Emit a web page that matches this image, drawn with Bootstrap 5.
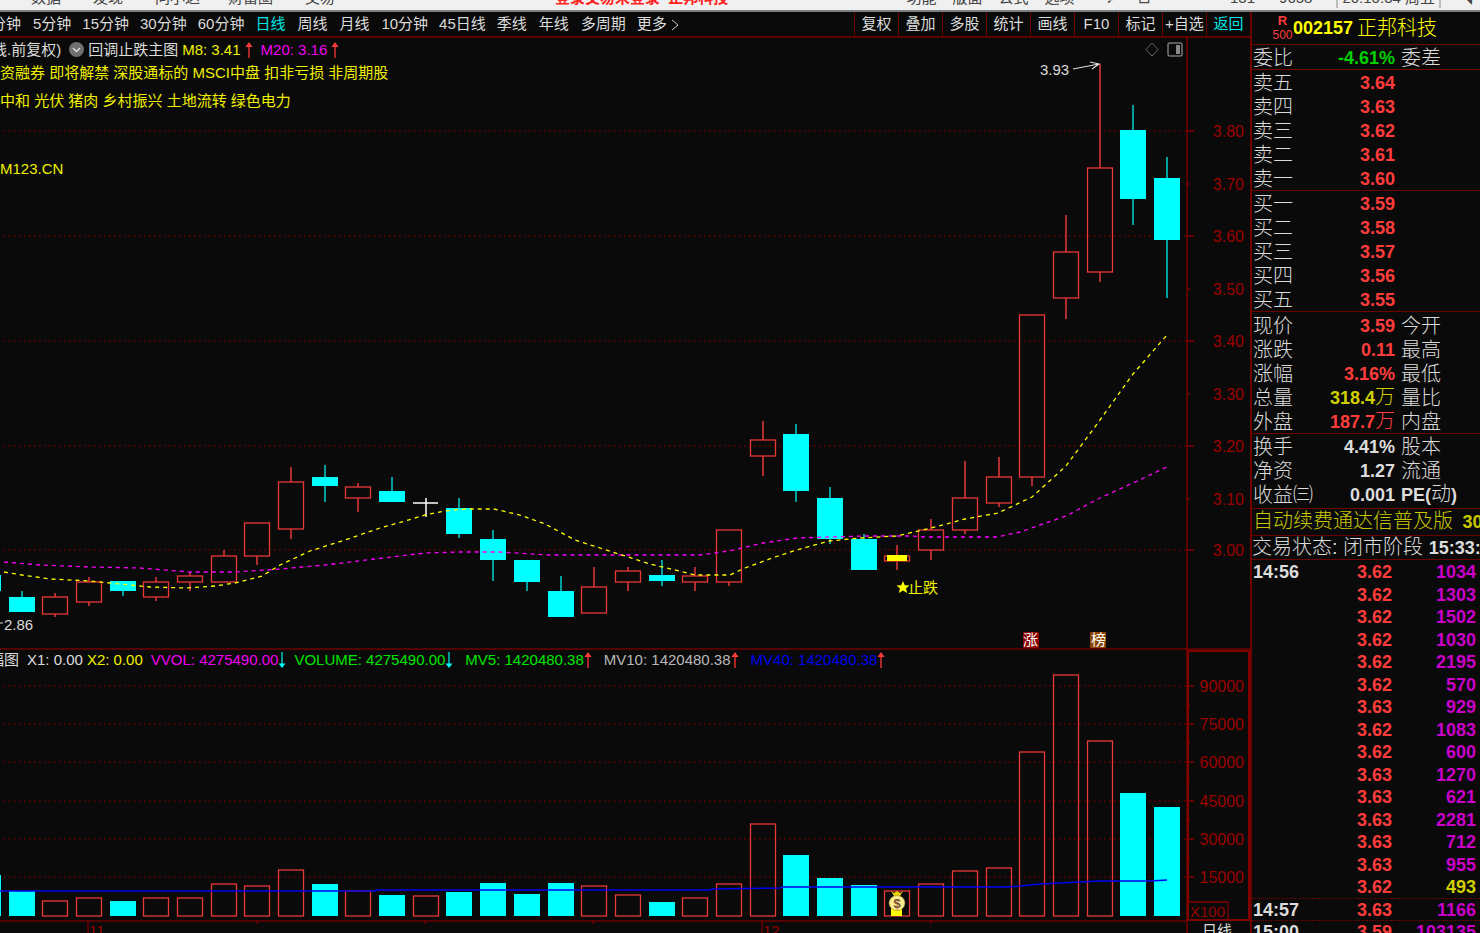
<!DOCTYPE html>
<html lang="zh-CN">
<head>
<meta charset="utf-8">
<meta name="viewport" content="width=device-width, initial-scale=1">
<title>002157 正邦科技</title>
<link href="https://cdn.jsdelivr.net/npm/bootstrap@5.3.0/dist/css/bootstrap.min.css" rel="stylesheet">
<style>
:root{--bg:#0a0a0a;--rule:#6e0000;--up:#ff3c3c;--cy:#00ffff;--ye:#ffff00;--mg:#ff00ff;--tx:#dcdcdc}
body{background:var(--bg);color:var(--tx);font:15px/24px "Liberation Sans","Noto Sans CJK SC",sans-serif;overflow:hidden}
button{background:none;border:0;padding:0;color:inherit;font:inherit;white-space:nowrap}
.menubar{height:12px;background:#f0f0f0;border-bottom:2px solid #7d8080;color:#444;overflow:hidden}
.menubar>div{height:20px;line-height:20px;margin-top:-12px;white-space:nowrap}
.alert-txt{color:#ff2020;font-weight:700}
.m-l{width:555px;padding-left:31px}
.m-r{padding-right:8px}
.clock{border-left:2px solid #bbb;border-right:2px solid #bbb;padding:0 4px}
.toolbar-row{height:26px;border-bottom:2px solid #5c0000}
.periods{margin-left:-9px;gap:11px;overflow:hidden}
.periods button{min-width:31px;text-align:left}
.tools button{width:44px;border-left:1px solid var(--rule)}
.c-cy{color:#00e6e6}.c-ye{color:#f0f000}.c-mg{color:#f000f0}.c-gr{color:#00e600}.c-gy{color:#b8b8b8}.c-bl{color:#0000f0}
.plot{position:relative;min-width:0}
.plot>svg{display:block;width:100%;height:auto}
.legend-over{position:absolute;top:0;left:0;white-space:nowrap}
.l1{margin-left:-8px;line-height:23px}
.l2{margin-left:-11px;line-height:20px}
.l3{padding-top:44px}
.far{margin-left:12px}
.arr{width:8px;height:16px}
.side{width:230px;border-left:2px solid var(--rule);overflow:hidden;font-size:20px;line-height:22px;white-space:nowrap}
.side b{font-size:18px;font-weight:700}
.ttl{height:33px;border-bottom:1px solid var(--rule);color:#ffff00;padding-left:20px}
.rating{width:21px;color:var(--up)}
.side .rating b,.rating span{display:block;font-size:13px;line-height:15px;text-align:center}
.rating span{font-size:12px}
.quote{width:100%;table-layout:fixed;border-bottom:1px solid var(--rule)}
.quote tr{height:24px}
.quote td,.quote th{padding:1px 0 0 1px;font-weight:300}
.quote th:first-child{width:60px;color:var(--tx)}
.quote td{width:83px;text-align:right}
.quote td+th{padding-left:6px}
.trade{margin-top:1px}
.last-q{border-bottom:0}
.red{color:var(--up)}.yel{color:#d0d000}.grn{color:#00d000}
.ttl,.promo,.state{font-weight:300}
.promo{height:28px;line-height:24px;margin-top:2px;border-top:1px solid var(--rule);border-bottom:1px solid var(--rule);color:#c8c800;padding-left:1px}
.state{height:24px;line-height:22px;border-bottom:1px solid var(--rule)}
.ticks{width:100%;table-layout:fixed;font-size:18px;line-height:20px;font-weight:700}
.ticks tr{height:23px}.ticks tr:nth-child(even){height:22px}
.ticks td{padding:1px 0 0 1px}
.ticks td:nth-child(1){width:60px}
.ticks td:nth-child(2){width:80px;text-align:right;color:var(--up)}
.ticks td:nth-child(3){text-align:right;padding-right:4px;color:#c800c8}
.ticks td.yel:nth-child(3){color:#d0d000}
.ticks .cut td{border-top:1px dotted #800000}
svg text{font-family:"Liberation Sans","Noto Sans CJK SC",sans-serif}
.ax{fill:#9c0000;font-size:16px;text-anchor:end}
</style>
<script src="https://cdn.jsdelivr.net/npm/bootstrap@5.3.0/dist/js/bootstrap.bundle.min.js"></script>
</head>
<body>
<svg class="d-none">
  <symbol id="up" viewBox="0 0 8 16"><path d="M4 4V16" stroke="#e03030" stroke-width="1.5"/><path d="M4 0L7.500 5H.5Z" fill="#ff3c3c"/></symbol>
  <symbol id="dn" viewBox="0 0 8 16"><path d="M4 0V12" stroke="#00c8c8" stroke-width="1.5"/><path d="M4 16L.5 11.500H7.500Z" fill="#00ffff"/></symbol>
</svg>
<div class="vh-100 d-flex flex-column overflow-hidden">
  <header class="menubar flex-shrink-0">
    <div class="d-flex">
      <nav class="m-l d-flex gap-4"><span class="me-2">数据</span><span class="me-2">发现</span><span class="me-1">问小达</span><span class="me-2">财富圈</span><span>交易</span></nav>
      <span class="alert-txt">登录交易未登录&nbsp; 正邦科技</span>
      <div class="m-r d-flex ms-auto"><span class="me-3">功能</span><span class="me-3">版面</span><span class="me-3">公式</span><span class="me-4">选项</span><span class="ms-2 me-4">♪</span><span class="me-4">⊟</span><span class="mx-2">一</span><span class="ms-4 me-4">131</span><span class="me-4">9658</span><span class="clock">20:10:34 周五</span><span class="ms-3">◥</span></div>
    </div>
  </header>
  <div class="d-flex flex-grow-1 overflow-hidden">
    <main class="flex-grow-1 overflow-hidden">
      <div class="toolbar-row d-flex justify-content-between">
        <div class="periods d-flex">
          <button>分钟</button><button>5分钟</button><button>15分钟</button><button>30分钟</button><button>60分钟</button><button class="c-cy">日线</button><button>周线</button><button>月线</button><button>10分钟</button><button>45日线</button><button>季线</button><button>年线</button><button>多周期</button><button>更多 <svg width="8" height="12" viewBox="0 0 8 12" fill="none" stroke="#ccc"><path d="M1 1L7 6L1 11"/></svg></button>
        </div>
        <div class="tools d-flex flex-shrink-0">
          <button>复权</button><button>叠加</button><button>多股</button><button>统计</button><button>画线</button><button>F10</button><button>标记</button><button>+自选</button><button class="c-cy">返回</button>
        </div>
      </div>
      <section class="plot">
        <svg id="price" viewBox="0 38 1250 612"></svg>
        <div class="legend-over">
          <div class="l1 d-flex align-items-center">
            <span>线.前复权)</span>
            <svg class="ms-2 me-1" width="15" height="15" viewBox="0 0 15 15"><circle cx="7.500" cy="7.500" r="7.500" fill="#707070"/><path d="M4 6L7.500 9.500L11 6" fill="none" stroke="#ddd" stroke-width="1.500"/></svg>
            <span>回调止跌主图</span>
            <span class="c-ye ms-1">M8: 3.41</span><svg class="arr ms-1"><use href="#up"/></svg>
            <span class="c-mg ms-2">M20: 3.16</span><svg class="arr ms-1"><use href="#up"/></svg>
          </div>
          <div class="c-ye">资融券 即将解禁 深股通标的 MSCI中盘 扣非亏损 非周期股</div>
          <div class="c-ye pt-1">中和 光伏 猪肉 乡村振兴 土地流转 绿色电力</div>
          <div class="c-ye l3">M123.CN</div>
        </div>
      </section>
      <section class="plot">
        <svg id="volume" viewBox="0 650 1250 283"></svg>
        <div class="legend-over">
          <div class="l2 d-flex align-items-center">
            <span>幅图</span><span class="ms-2">X1: 0.00</span><span class="c-ye ms-1">X2: 0.00</span>
            <span class="c-mg ms-2">VVOL: 4275490.00</span><svg class="arr"><use href="#dn"/></svg>
            <span class="c-gr ms-2">VOLUME: 4275490.00</span><svg class="arr"><use href="#dn"/></svg>
            <span class="c-gr far">MV5: 1420480.38</span><svg class="arr"><use href="#up"/></svg>
            <span class="c-gy far">MV10: 1420480.38</span><svg class="arr"><use href="#up"/></svg>
            <span class="c-bl far">MV40: 1420480.38</span><svg class="arr"><use href="#up"/></svg>
          </div>
        </div>
      </section>
    </main>
    <aside class="side flex-shrink-0">
      <div class="ttl d-flex align-items-center"><div class="rating"><b>R</b><span>500</span></div><b>002157</b><span class="ms-1">正邦科技</span></div>
      <table class="quote"><tr><th>委比</th><td><b class="grn">-4.61%</b></td><th>委差</th></tr></table>
      <table class="quote red">
        <tr><th>卖五</th><td><b>3.64</b></td><th></th></tr><tr><th>卖四</th><td><b>3.63</b></td><th></th></tr><tr><th>卖三</th><td><b>3.62</b></td><th></th></tr><tr><th>卖二</th><td><b>3.61</b></td><th></th></tr><tr><th>卖一</th><td><b>3.60</b></td><th></th></tr>
      </table>
      <table class="quote red">
        <tr><th>买一</th><td><b>3.59</b></td><th></th></tr><tr><th>买二</th><td><b>3.58</b></td><th></th></tr><tr><th>买三</th><td><b>3.57</b></td><th></th></tr><tr><th>买四</th><td><b>3.56</b></td><th></th></tr><tr><th>买五</th><td><b>3.55</b></td><th></th></tr>
      </table>
      <table class="quote trade">
        <tr><th>现价</th><td class="red"><b>3.59</b></td><th>今开</th></tr><tr><th>涨跌</th><td class="red"><b>0.11</b></td><th>最高</th></tr><tr><th>涨幅</th><td class="red"><b>3.16%</b></td><th>最低</th></tr><tr><th>总量</th><td class="yel"><b>318.4</b>万</td><th>量比</th></tr><tr><th>外盘</th><td class="red"><b>187.7</b>万</td><th>内盘</th></tr>
      </table>
      <table class="quote last-q">
        <tr><th>换手</th><td><b>4.41%</b></td><th>股本</th></tr><tr><th>净资</th><td><b>1.27</b></td><th>流通</th></tr><tr><th>收益㈢</th><td><b>0.001</b></td><th><b>PE(</b>动<b>)</b></th></tr>
      </table>
      <div class="promo">自动续费通达信普及版 <b class="ms-1">30</b></div>
      <div class="state">交易状态: 闭市阶段 <b>15:33:12</b></div>
      <table class="ticks">
        <tr><td>14:56</td><td>3.62</td><td>1034</td></tr>
        <tr><td></td><td>3.62</td><td>1303</td></tr>
        <tr><td></td><td>3.62</td><td>1502</td></tr>
        <tr><td></td><td>3.62</td><td>1030</td></tr>
        <tr><td></td><td>3.62</td><td>2195</td></tr>
        <tr><td></td><td>3.62</td><td>570</td></tr>
        <tr><td></td><td>3.63</td><td>929</td></tr>
        <tr><td></td><td>3.62</td><td>1083</td></tr>
        <tr><td></td><td>3.62</td><td>600</td></tr>
        <tr><td></td><td>3.63</td><td>1270</td></tr>
        <tr><td></td><td>3.63</td><td>621</td></tr>
        <tr><td></td><td>3.63</td><td>2281</td></tr>
        <tr><td></td><td>3.63</td><td>712</td></tr>
        <tr><td></td><td>3.63</td><td>955</td></tr>
        <tr><td></td><td>3.62</td><td class="yel">493</td></tr>
        <tr class="cut"><td>14:57</td><td>3.63</td><td>1166</td></tr>
        <tr class="cut"><td>15:00</td><td>3.59</td><td>103135</td></tr>
      </table>
    </aside>
  </div>
</div>
<script>
// [kind, body top, body bottom, high, low, volume top]; r = rise, c = fall, w = flat, y = signal day
const days = [
 ['c',597,612,591,612,891],['r',597,614,593,617,901],['r',582,602,577,606,898],['c',581,591,581,596,901],
 ['r',582,597,577,601,898],['r',576,582,572,591,898],['r',556,582,550,582,884],['r',523,556,523,565,886],
 ['r',482,529,467,539,870],['c',477,486,465,502,884],['r',487,498,483,512,891],['c',491,502,477,502,895],
 ['w',503,503,498,517,896],['c',508,534,498,538,892],['c',539,560,530,581,883],['c',560,582,560,591,894],
 ['c',591,617,576,617,883],['r',587,613,567,613,886],['r',571,582,567,591,895],['c',575,581,560,586,902],
 ['r',576,582,567,591,898],['r',530,582,530,586,884],['r',440,456,421,476,824],['c',434,491,424,502,855],
 ['c',498,539,487,544,878],['c',539,570,534,570,885],['y',556,561,545,570,891],['r',530,550,519,560,884],
 ['r',498,530,461,534,871],['r',477,503,457,507,868],['r',315,477,315,486,752],['r',252,298,215,319,675],
 ['r',168,272,64,282,741],['c',130,199,105,225,793],['c',178,240,157,298,807]];
const RED='#e83838', CY='#00ffff';
const dots = y => `<path d="M4 ${y}H1187" stroke="#6a0000" stroke-width="1.500" stroke-dasharray="1.500 3.500"/>`;
const box = (k,x,t,b) => k==='c' ? `<rect x="${x-13}" y="${t}" width="26" height="${b-t}" fill="${CY}"/>`
  : `<rect x="${x-12.5}" y="${t}" width="25" height="${b-t}" fill="none" stroke="${RED}" stroke-width="1.300"/>`;
let p = '', v = '';
[131,236,341,446,550].forEach(y => p += dots(y));
[131,184,236,289,341,394,446,499,550].forEach((y,i) => {
  p += `<path d="M1187 ${y}H${i%2?1190:1194}" stroke="#800000" stroke-width="1.500"/><text class="ax" x="1244" y="${y+6}">${(3.8-i/10).toFixed(2)}</text>`;
});
[686,724,762,801,839,877].forEach((y,i) => {
  v += dots(y) + `<path d="M1187 ${y}H1194M1187 ${y+19}H1190" stroke="#800000" stroke-width="1.500"/><text class="ax" x="1244" y="${y+6}">${90000-i*15000}</text>`;
});
p += `<rect x="0" y="575" width="1" height="16" fill="${CY}"/>`;
v += `<rect x="0" y="875" width="1" height="41" fill="${CY}"/>`;
days.forEach(([k,t,b,h,l,vt],i) => {
  const x = Math.round(21.5 + 33.69*i);
  const c = k==='c' ? '#00d0d0' : k==='w' ? '#fff' : RED;
  p += `<path d="M${x} ${h}V${t}M${x} ${b}V${l}" stroke="${c}" stroke-width="1.500"/>`;
  if (k==='w') p += `<path d="M${x-13} ${t}H${x+12}" stroke="#fff" stroke-width="1.500"/>`;
  else p += box(k,x,t,b);
  if (k==='y') p += `<rect x="${x-10}" y="555" width="20" height="6" fill="#ff0"/>`;
  v += box(k==='c'?'c':'r',x,vt,916);
});
const dash = (pts,c) => `<polyline points="${pts}" fill="none" stroke="${c}" stroke-width="1.300" stroke-dasharray="4 4"/>`;
p += dash('4,562 40,565 90,567 140,568 190,572 235,572 280,569 325,565 375,559 425,553 460,552 500,552 550,555 640,555 700,555 729,551 763,543 797,538 829,537 863,536 910,536 925,537 997,537 1020,532 1066,516 1100,498 1133,483 1167,467','#f0f');
p += dash('4,572 22,575 50,579 90,581 120,584 150,587 185,588 215,586 235,583 262,576 280,565 310,551 345,540 380,528 405,521 425,515 445,511 465,509 494,509 520,515 545,524 575,540 600,548 625,556 650,564 675,570 695,575 730,575 745,568 775,557 800,549 829,541 860,538 897,536 931,528 965,519 998,513 1032,497 1066,466 1100,420 1133,374 1167,335','#ff0');
p += `<path d="M1187 38V650" stroke="#5c0000" stroke-width="2"/><path d="M0 649H1250" stroke="#6e0000" stroke-width="1.500"/>
<text x="1040" y="75" fill="#dcdcdc" font-size="15">3.93</text>
<path d="M1073 69L1099 64M1090 62L1099 64L1092 69" fill="none" stroke="#ddd" stroke-width="1.200"/>
<path d="M0 623H3" stroke="#ddd"/><text x="4" y="630" fill="#dcdcdc" font-size="15">2.86</text>
<path d="M903 581L904.800 585.200L909.500 585.500L906 588.500L907.200 593L903 590.500L898.800 593L900 588.500L896.500 585.500L901.200 585.200Z" fill="#ff0"/>
<text x="908" y="593" fill="#f0f000" font-size="15">止跌</text>
<rect x="1023" y="632" width="16" height="16" rx="1" fill="#8b0000"/><text x="1023" y="645" fill="#fff" font-size="15">涨</text>
<rect x="1090" y="632" width="16" height="16" rx="1" fill="#8a4300"/><text x="1091" y="645" fill="#fff" font-size="15">榜</text>
<path d="M1152 43L1158 49.500L1152 56L1146 49.500Z" fill="none" stroke="#666"/>
<rect x="1168" y="43" width="14" height="13" rx="2" fill="none" stroke="#777" stroke-width="1.500"/><rect x="1176" y="45" width="4" height="9" fill="#888"/>`;
v += `<polyline points="0,891 375,891 376,890 710,890 712,889 780,888 782,887 1005,887 1020,886 1040,884 1100,881 1150,881 1167,880" fill="none" stroke="#0000f0" stroke-width="1.500"/>
<rect x="891" y="907" width="11" height="9" fill="#ff0"/>
<path d="M891 891L894 893L897 891L900 893L903 891L900 896H894Z" fill="#e8d800"/><ellipse cx="897" cy="903" rx="8" ry="7.500" fill="#f8ec90" stroke="#a08030" stroke-width=".6"/>
<text x="897" y="908" text-anchor="middle" font-size="13" font-weight="700" fill="#7a4a30">$</text>
<path d="M0 921H1187M88 921V933M762 921V933M257 921V924M425 921V924M593 921V924M931 921V924" stroke="#6e0000" stroke-width="1.500"/>
<path d="M1187 650V933" stroke="#5c0000" stroke-width="2"/>
<rect x="1188" y="651" width="61" height="269" fill="none" stroke="#800000" stroke-width="2"/>
<path d="M1188 902H1228V919" fill="none" stroke="#800000" stroke-width="1.300"/>
<text x="1190" y="917" fill="#9c0000" font-size="15">X100</text>
<text x="89" y="936" fill="#9c0000" font-size="15">11</text><text x="763" y="936" fill="#9c0000" font-size="15">12</text>
<text x="1202" y="936" fill="#dcdcdc" font-size="15">日线</text>`;
document.getElementById('price').innerHTML = p;
document.getElementById('volume').innerHTML = v;
</script>
</body>
</html>
